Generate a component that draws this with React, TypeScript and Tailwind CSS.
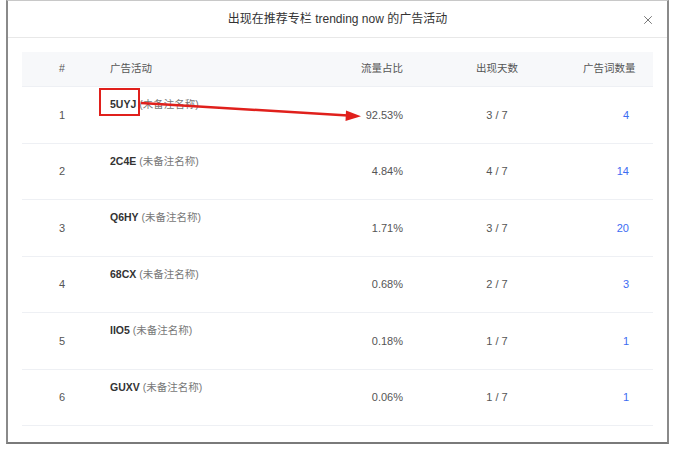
import { X } from 'lucide-react';

const rows = [
    { id: 1, code: '5UYJ', share: '92.53%', days: '3 / 7', words: 4 },
    { id: 2, code: '2C4E', share: '4.84%', days: '4 / 7', words: 14 },
    { id: 3, code: 'Q6HY', share: '1.71%', days: '3 / 7', words: 20 },
    { id: 4, code: '68CX', share: '0.68%', days: '2 / 7', words: 3 },
    { id: 5, code: 'IIO5', share: '0.18%', days: '1 / 7', words: 1 },
    { id: 6, code: 'GUXV', share: '0.06%', days: '1 / 7', words: 1 },
];

const cols = 'grid grid-cols-[80px_198px_111px_172px_69px]';

export default function App() {
    return (
        <div
            className="relative w-[673px] h-[450px] bg-white overflow-hidden"
            style={{ fontFamily: '"Liberation Sans", "Noto Sans CJK SC", sans-serif' }}
        >
            <div className="ml-[6px] w-[663px] h-[444px] border-x-2 border-b-2 border-t border-t-[#c8c8c8] border-x-[#8a8a8a] border-b-[#7a7a7a] bg-white">
                {/* Header */}
                <div className="relative h-[37px] flex items-center justify-center border-b border-[#e8e8e8]">
                    <span className="text-[12px] text-[#333]">出现在推荐专栏 trending now 的广告活动</span>
                    <X className="absolute right-[12px] top-[12px] w-[14px] h-[14px] text-[#666]" strokeWidth={1.5} />
                </div>

                {/* Table */}
                <div className="mx-[14px] mt-[14px] text-[11px]">
                    <div className={`${cols} h-[35px] items-center bg-[#f7f8fa] text-[#555] border-b border-[#eef0f4] text-[10.5px]`}>
                        <div className="text-center">#</div>
                        <div className="pl-[8px]">广告活动</div>
                        <div className="text-right pr-[8px]">流量占比</div>
                        <div className="text-center">出现天数</div>
                        <div className="text-right pr-[23px] whitespace-nowrap">广告词数量</div>
                    </div>
                    {rows.map(r => (
                        <div key={r.id} className={`${cols} h-[56.5px] items-center border-b border-[#eef0f4] text-[#555]`}>
                            <div className="text-center">{r.id}</div>
                            <div className="pl-[8px] self-start pt-[9px] whitespace-nowrap">
                                <span className="font-bold text-[#333] text-[10.5px]">{r.code}</span>
                                <span className="text-[#777] text-[10.5px]"> (未备注名称)</span>
                            </div>
                            <div className="text-right pr-[8px]">{r.share}</div>
                            <div className="text-center">{r.days}</div>
                            <div className="text-right pr-[23px] text-[#3d6cf2]">{r.words}</div>
                        </div>
                    ))}
                </div>
            </div>

            {/* Annotation overlay */}
            <div className="absolute left-[99px] top-[88px] w-[41px] h-[28px] border-2 border-[#e0201c]" />
            <svg className="absolute left-0 top-0 pointer-events-none" width="673" height="450">
                <line x1="141" y1="103" x2="348" y2="115.5" stroke="#e0201c" strokeWidth="2.5" />
                <polygon points="361,116.2 346,110.5 345.5,121" fill="#e0201c" />
            </svg>
        </div>
    );
}
